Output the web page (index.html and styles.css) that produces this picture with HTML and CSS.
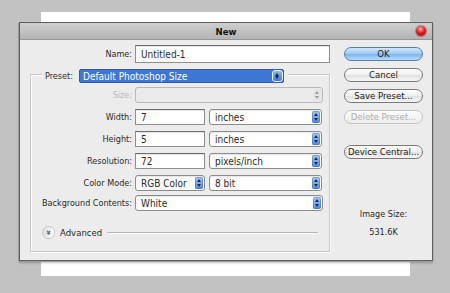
FILE: index.html
```html
<!DOCTYPE html>
<html lang="en">
<head>
    <meta charset="utf-8" />
    <title>New</title>
    <link rel="stylesheet" href="styles.css">
</head>
<body>
<div class="sheet">
  <div class="dialog">
    <div class="titlebar">
      <span class="title">New</span>
      <span class="close"></span>
    </div>
    <div class="body">
      <div class="main">
        <div class="row name-row">
          <label>Name:</label>
          <div class="field">Untitled-1</div>
        </div>

        <div class="group">
          <div class="legend">
            <label>Preset:</label>
            <div class="select preset">Default Photoshop Size<span class="step"></span></div>
          </div>

          <div class="row off">
            <label>Size:</label>
            <div class="select"><span class="step"></span></div>
          </div>
          <div class="row split">
            <label>Width:</label>
            <div class="field">7</div>
            <div class="select">inches<span class="step"></span></div>
          </div>
          <div class="row split">
            <label>Height:</label>
            <div class="field">5</div>
            <div class="select">inches<span class="step"></span></div>
          </div>
          <div class="row split">
            <label>Resolution:</label>
            <div class="field">72</div>
            <div class="select">pixels/inch<span class="step"></span></div>
          </div>
          <div class="row split">
            <label>Color Mode:</label>
            <div class="select">RGB Color<span class="step"></span></div>
            <div class="select">8 bit<span class="step"></span></div>
          </div>
          <div class="row bg-row">
            <label>Background Contents:</label>
            <div class="select">White<span class="step"></span></div>
          </div>

          <div class="advanced">
            <span class="chevron">&#187;</span>
            <span>Advanced</span>
            <span class="rule"></span>
          </div>
        </div>
      </div>

      <div class="side">
        <button type="button" class="btn primary">OK</button>
        <button type="button" class="btn">Cancel</button>
        <button type="button" class="btn">Save Preset...</button>
        <button type="button" class="btn" disabled>Delete Preset...</button>
        <button type="button" class="btn device">Device Central...</button>
        <div class="size-info">
          <div>Image Size:</div>
          <div>531.6K</div>
        </div>
      </div>
    </div>
  </div>
</div>
</body>
</html>
```

FILE: styles.css
```css
body{margin:0;padding:12px 0 0 41px;background:#c2c2c2;font-family:"DejaVu Sans Condensed","DejaVu Sans",sans-serif;font-size:9px;color:#2a2a2a;}
.sheet{width:369px;height:264px;box-sizing:border-box;padding-top:10px;background:#fff;}

.dialog{width:414px;height:239px;box-sizing:border-box;margin-left:-22px;background:#ececec;border:1px solid #5f5f5f;box-shadow:-1px 1px 0 #9a9a9a,0 2px 2px rgba(0,0,0,.25);}
.titlebar{position:relative;height:16px;background:linear-gradient(#cfcfcf,#b3b3b3);border-bottom:1px solid #979797;display:flex;align-items:center;justify-content:center;}
.title{font-weight:bold;font-size:9.5px;color:#111;}
.close{position:absolute;right:6px;top:3px;width:10px;height:10px;border-radius:50%;background:radial-gradient(circle at 45% 30%,#ffb0b0 0,#e02020 45%,#8a0000 100%);box-shadow:0 0 0 1px rgba(120,0,0,.35);}

.body{display:flex;}
.main{width:313px;padding-top:5px;}
.side{width:79px;margin-left:11px;padding-top:7px;display:flex;flex-direction:column;align-items:stretch;}

.row{display:grid;align-items:center;column-gap:3px;}
.row label{text-align:right;white-space:nowrap;}
.name-row{grid-template-columns:112px 195px;height:18px;}
.group .row{grid-template-columns:101px 188px;height:16px;margin-top:6px;}
.group .row.split{grid-template-columns:101px 70px 114px;column-gap:3px;}
.group .row.split .field + .select,.group .row.split .select + .select{margin-left:1px;}
.group .row.bg-row{margin-top:4px;}
.group .row.off{margin-top:4px;}
.row.off label{color:#b8b8b8;}

.field{height:100%;box-sizing:border-box;background:#fff;border:1px solid #8e8e8e;border-top-color:#6c6c6c;box-shadow:inset 0 1px 1px rgba(0,0,0,.12);padding:0 5px;display:flex;align-items:center;font-size:10px;}
.select{position:relative;height:100%;box-sizing:border-box;background:#fff;border:1px solid #8c8c8c;border-radius:3px;box-shadow:inset 0 1px 1px rgba(0,0,0,.1);padding:0 14px 0 5px;display:flex;align-items:center;font-size:10px;white-space:nowrap;overflow:hidden;}
.row.off .select{background:#ebebeb;border-color:#b9b9b9;box-shadow:none;}

.step{position:absolute;right:1px;top:1px;bottom:1px;width:8px;border-radius:2px;background:linear-gradient(#a9ccf4,#4f8de0);box-shadow:inset 0 0 0 1px rgba(40,80,150,.35);}
.step::before,.step::after{content:"";position:absolute;left:2px;border-left:2px solid transparent;border-right:2px solid transparent;}
.step::before{top:2px;border-bottom:3px solid #1d2c52;}
.step::after{bottom:2px;border-top:3px solid #1d2c52;}
.row.off .step{background:#e6e6e6;box-shadow:none;}
.row.off .step::before{border-bottom-color:#9a9a9a;}
.row.off .step::after{border-top-color:#9a9a9a;}

.group{width:300px;box-sizing:border-box;margin:11px 0 0 10px;border:1px solid #c9c9c9;box-shadow:inset 1px 1px 0 #fafafa,1px 1px 0 #fafafa;padding-bottom:13px;}
.legend{display:flex;align-items:center;gap:6px;width:max-content;height:14px;margin:-6px 0 0 11px;padding:0 4px 0 3px;background:#ececec;}
.select.preset{width:205px;height:14px;background:#3e77d3;border-color:#2e5aa8;color:#fff;border-radius:2px;box-shadow:none;padding-left:3px;}
.select.preset .step{right:0;top:0;bottom:0;width:9px;border:1px solid #f2f6fc;background:linear-gradient(#8fbaf0,#3f7ad6);box-shadow:none;border-radius:3px;}

.advanced{display:flex;align-items:center;gap:6px;margin:15px 11px 0 12px;height:12px;font-size:9.5px;}
.chevron{width:11px;height:11px;border-radius:50%;background:linear-gradient(#fdfdfd,#dcdcdc);box-shadow:0 0 0 1px #c4c4c4;display:flex;align-items:center;justify-content:center;font-size:9px;line-height:1;transform:rotate(90deg);color:#333;font-weight:bold;}
.rule{flex:1;height:1px;background:#b5b5b5;box-shadow:0 1px 0 #fafafa;margin-left:-1px;}

.btn{height:14px;padding:0;margin:0 0 7px;font:inherit;font-size:9.5px;line-height:12px;white-space:nowrap;color:#222;border:1px solid #7a7a7a;border-radius:8px;background:linear-gradient(#ffffff,#efefef 50%,#e1e1e1 51%,#f6f6f6);}
.btn.primary{background:linear-gradient(#d3e8fb,#9ccaf3 50%,#7ab4ec 51%,#b6dbfa);border-color:#5a7fae;}
.btn[disabled]{color:#adadad;border-color:#c2c2c2;background:linear-gradient(#fbfbfb,#eeeeee);margin-bottom:0;}
.btn.device{margin-top:21px;}
.size-info{margin-top:42px;text-align:center;display:flex;flex-direction:column;gap:6px;line-height:12px;}
```
